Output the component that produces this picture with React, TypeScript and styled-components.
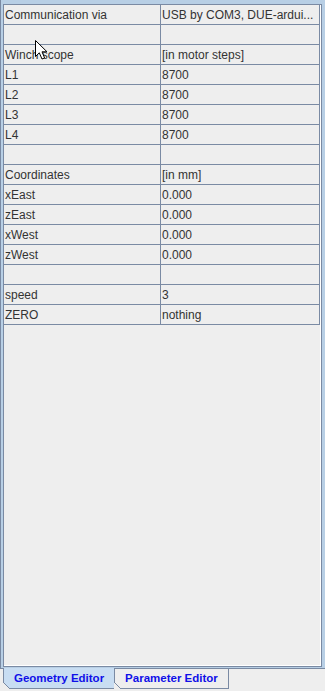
import styled, { createGlobalStyle } from 'styled-components';

const GRID = '#7a8aa3';
const BAND = '#b8cfe5';

interface Row {
    key: string;
    value: string;
}

const rows: Row[] = [
    { key: 'Communication via', value: 'USB by COM3, DUE-ardui...' },
    { key: '', value: '' },
    { key: 'Winch scope', value: '[in motor steps]' },
    { key: 'L1', value: '8700' },
    { key: 'L2', value: '8700' },
    { key: 'L3', value: '8700' },
    { key: 'L4', value: '8700' },
    { key: '', value: '' },
    { key: 'Coordinates', value: '[in mm]' },
    { key: 'xEast', value: '0.000' },
    { key: 'zEast', value: '0.000' },
    { key: 'xWest', value: '0.000' },
    { key: 'zWest', value: '0.000' },
    { key: '', value: '' },
    { key: 'speed', value: '3' },
    { key: 'ZERO', value: 'nothing' },
];

const tabs = ['Geometry Editor', 'Parameter Editor'];

const Cursor = () => (
    <CursorIcon width='13' height='20' viewBox='0 0 13 20'>
        <path
            d='M0.5 0.5 L0.5 16.5 L4.3 12.8 L7 19 L9.6 17.9 L7 11.8 L12 11.8 Z'
            fill='#ffffff'
            stroke='#000000'
            strokeWidth='1'
            strokeLinejoin='miter'
        />
    </CursorIcon>
);

const App = () => {
    return (
        <>
            <GlobalStyle />
            <Window>
                <Frame>
                    <Scroller>
                        <Viewport>
                            <Table>
                                {rows.map((row, i) => (
                                    <TableRow key={i}>
                                        <Cell>{row.key}</Cell>
                                        <Cell>{row.value}</Cell>
                                    </TableRow>
                                ))}
                            </Table>
                        </Viewport>
                    </Scroller>
                </Frame>
                <TabStrip>
                    {tabs.map((title, i) => (
                        <Tab key={title} $selected={i === 0}>
                            {title}
                        </Tab>
                    ))}
                </TabStrip>
                <Cursor />
            </Window>
        </>
    );
};

const GlobalStyle = createGlobalStyle`
    html, body {
        margin: 0;
        padding: 0;
        background: #eeeeee;
    }
    * {
        box-sizing: border-box;
    }
`;

const Window = styled.div`
    position: relative;
    display: flex;
    flex-direction: column;
    width: 325px;
    height: 691px;
    background: #eeeeee;
    font-family: 'Liberation Sans', Arial, sans-serif;
    font-size: 12px;
    color: #333333;
    overflow: hidden;
`;

const Frame = styled.div`
    display: flex;
    height: 669px;
    padding: 4px 3px 1px 2px;
    background: ${BAND};
    border-left: 1px solid ${GRID};
    border-bottom: 1px solid ${GRID};
`;

const Scroller = styled.div`
    display: flex;
    flex: 1;
    border: 1px solid ${GRID};
`;

const Viewport = styled.div`
    flex: 1;
    background: #eeeeee;
    border-right: 1px solid #ffffff;
    border-bottom: 1px solid #ffffff;
`;

const Table = styled.div`
    display: flex;
    flex-direction: column;
    width: 316px;
`;

const TableRow = styled.div`
    display: grid;
    grid-template-columns: 157px 159px;
    height: 20px;
`;

const Cell = styled.div`
    height: 20px;
    padding: 1px 2px 0 1px;
    line-height: 19px;
    white-space: nowrap;
    overflow: hidden;
    border-right: 1px solid ${GRID};
    border-bottom: 1px solid ${GRID};
`;

const TabStrip = styled.div`
    display: flex;
    height: 20px;
    padding-left: 3px;
`;

const Tab = styled.div<{ $selected?: boolean }>`
    position: relative;
    display: flex;
    align-items: center;
    height: ${({ $selected }) => ($selected ? '21px' : '20px')};
    margin-top: ${({ $selected }) => ($selected ? '-1px' : '0')};
    padding: 0 10px 1px 10px;
    background: ${({ $selected }) => ($selected ? '#c8ddf2' : '#eeeeee')};
    border-left: ${({ $selected }) => ($selected ? `1px solid ${GRID}` : 'none')};
    border-right: 1px solid ${GRID};
    border-bottom: 1px solid ${GRID};
    font-size: 11.5px;
    font-weight: bold;
    color: #1010e8;
    white-space: nowrap;

    &::after {
        content: '';
        position: absolute;
        left: -1px;
        bottom: -1px;
        width: 7px;
        height: 7px;
        background: linear-gradient(
            to top right,
            #eeeeee calc(50% - 0.6px),
            ${GRID} calc(50% - 0.6px),
            ${GRID} calc(50% + 0.6px),
            transparent calc(50% + 0.6px)
        );
    }
`;

const CursorIcon = styled.svg`
    position: absolute;
    left: 35px;
    top: 40px;
`;

export default App;
